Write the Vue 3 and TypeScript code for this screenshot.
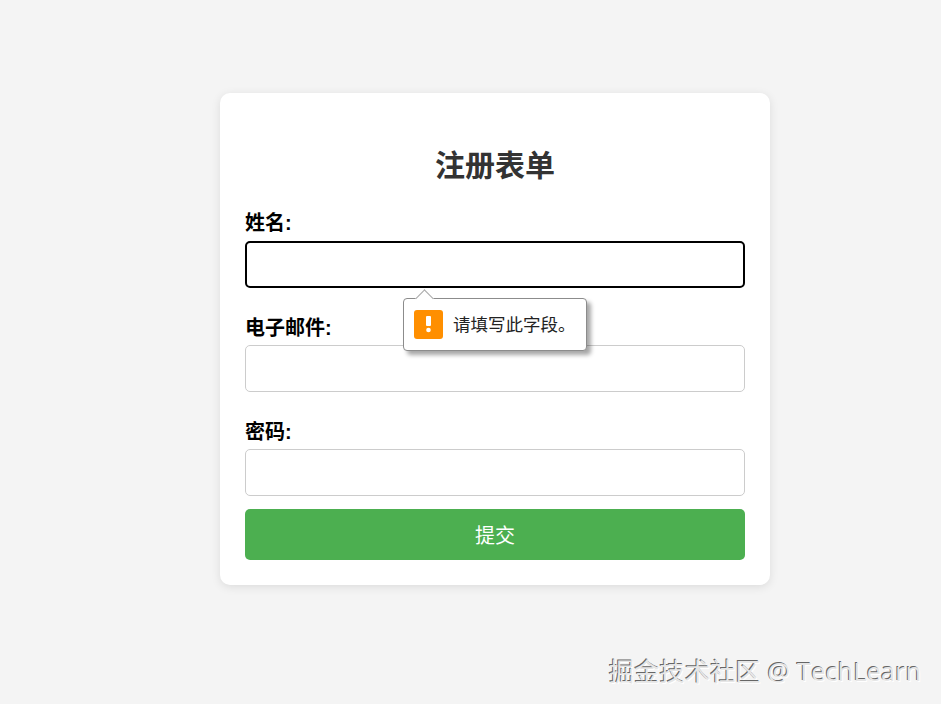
<script setup lang="ts">
interface Field {
  label: string
  type: string
  focused?: boolean
}
const fields: Field[] = [
  { label: '姓名:', type: 'text', focused: true },
  { label: '电子邮件:', type: 'email' },
  { label: '密码:', type: 'password' },
]
</script>

<template>
  <main class="page">
    <form class="card" novalidate @submit.prevent>
      <h2 class="title">注册表单</h2>
      <div class="fields">
        <div v-for="f in fields" :key="f.label" class="field">
          <label class="label">{{ f.label }}</label>
          <input class="input" :class="{ focused: f.focused }" :type="f.type" />
          <div v-if="f.focused" class="bubble">
            <span class="arrow"></span>
            <span class="warn">
              <svg width="29" height="29" viewBox="0 0 29 29">
                <rect x="12" y="6" width="5" height="10" rx="1" fill="#fff" />
                <circle cx="14.5" cy="20" r="2.3" fill="#fff" />
              </svg>
            </span>
            <span class="msg">请填写此字段。</span>
          </div>
        </div>
      </div>
      <button class="submit" type="submit">提交</button>
    </form>
    <div class="mark">掘金技术社区 @ TechLearn</div>
  </main>
</template>

<style>
html, body { margin: 0; background: #f4f4f4; }
</style>

<style scoped>
.page {
  position: relative;
  height: 704px;
  width: 941px;
  overflow: hidden;
  box-sizing: border-box;
  padding: 93px 0 0 220px;
  background: #f4f4f4;
  font-family: "Liberation Sans", "Noto Sans CJK SC", sans-serif;
}
.card {
  box-sizing: border-box;
  width: 550px;
  height: 492px;
  padding: 25px;
  background: #fff;
  border-radius: 10px;
  box-shadow: 0 2px 10px rgba(0, 0, 0, 0.1);
}
.title {
  margin: 27px 0 23px;
  line-height: 42px;
  font-size: 30px;
  font-weight: 700;
  text-align: center;
  color: #333;
}
.fields {
  display: flex;
  flex-direction: column;
  gap: 27px;
}
.field {
  position: relative;
  display: flex;
  flex-direction: column;
  gap: 4px;
}
.field:first-child {
  gap: 5px;
}
.label {
  height: 26px;
  line-height: 26px;
  font-size: 20px;
  font-weight: 700;
  color: #000;
}
.input {
  box-sizing: border-box;
  width: 500px;
  height: 47px;
  padding: 0 10px;
  background: #fff;
  border: 1px solid #ccc;
  border-radius: 5px;
  outline: none;
}
.input.focused {
  border: 2px solid #000;
}
.bubble {
  position: absolute;
  left: 158px;
  top: 88px;
  box-sizing: border-box;
  width: 184px;
  height: 53px;
  display: flex;
  align-items: center;
  padding-left: 10px;
  gap: 10px;
  background: #fff;
  border: 1px solid #8c8c8c;
  border-radius: 4px;
  box-shadow: 4px 4px 4px rgba(0, 0, 0, 0.35);
  z-index: 2;
}
.arrow {
  position: absolute;
  left: 14px;
  top: -7px;
  width: 12px;
  height: 12px;
  background: #fff;
  border-top: 1px solid #a8a8a8;
  border-left: 1px solid #a8a8a8;
  transform: rotate(45deg);
}
.warn {
  width: 29px;
  height: 29px;
  border-radius: 3px;
  background: #ff8f00;
  display: block;
}
.warn svg {
  display: block;
}
.msg {
  font-size: 17.5px;
  padding-bottom: 3px;
  color: #222;
}
.submit {
  display: block;
  width: 500px;
  height: 51px;
  margin-top: 13px;
  padding: 0;
  border: none;
  border-radius: 5px;
  background: #4caf50;
  color: #fff;
  font-family: inherit;
  font-size: 20px;
}
.mark {
  position: absolute;
  left: 609px;
  top: 655px;
  font-family: "Open Sans", "Noto Sans CJK SC", sans-serif;
  font-size: 25px;
  letter-spacing: 0.3px;
  line-height: 32px;
  white-space: nowrap;
  color: #e6e6e6;
  text-shadow: -1px -1px 0 #666, 1px 1px 0 #fff;
}
</style>
